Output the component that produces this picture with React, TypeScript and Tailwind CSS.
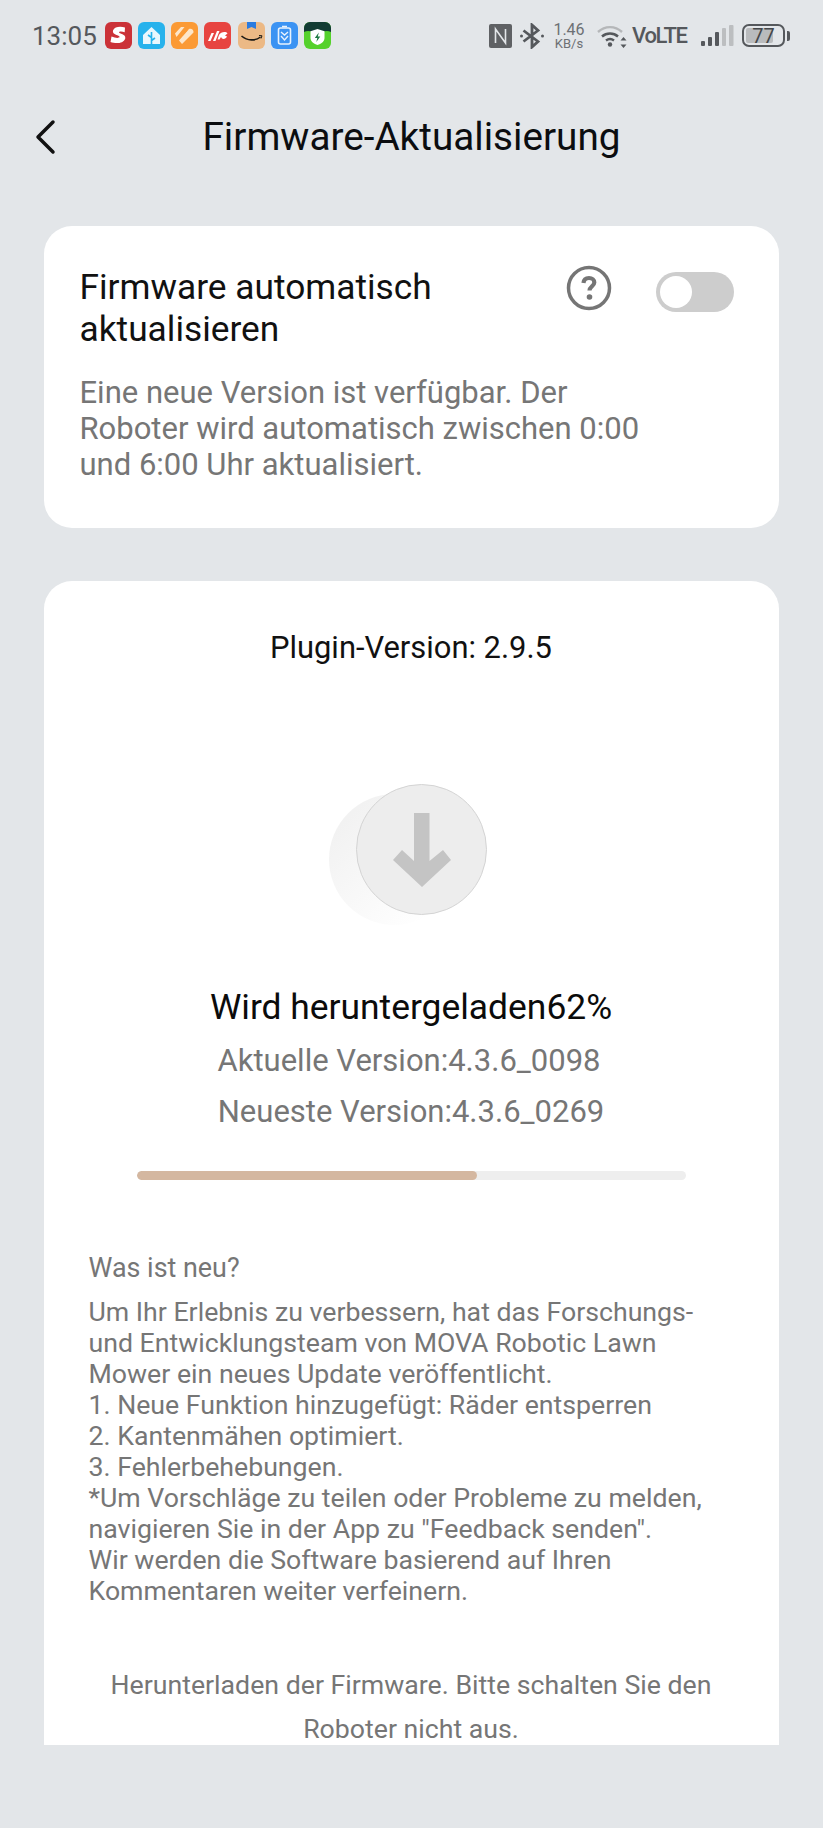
import React from "react";

const Font = "font-['Roboto',sans-serif]";

function AppIcons() {
  return (
    <div className="flex items-center gap-[6.2px]">
      <svg width="27" height="27" viewBox="0 0 27 27"><rect width="27" height="27" rx="6" fill="#cb3238"/><path d="M20 5.500c-4.500-1.200-10.500-1-12 3-1.300 4.500 7 4.500 6.500 6.500-.4 1.500-4.500 1-8-.5l-1 5.500c5 1.800 12.800 1.800 14.700-3.300 1.300-5-6.500-5-6.200-6.500.3-1 3.500-.8 5.700 0z" fill="#fff"/></svg>
      <svg width="27" height="27" viewBox="0 0 27 27"><rect width="27" height="27" rx="6" fill="#27b2ec"/><path d="M13.500 5 5 13v9h17v-9z" fill="#eaf7fd"/><path d="M13.500 10v12M13.500 15.500l-3.500-2.500M13.500 18.500l3.500-2.500" stroke="#27b2ec" strokeWidth="1.600" fill="none"/></svg>
      <svg width="27" height="27" viewBox="0 0 27 27"><rect width="27" height="27" rx="6" fill="#fb9a35"/><path d="M4 11.500 10 5h3.500L5.500 15zM8 18.500 18 7c2-1 5 .5 4.500 3.500L11 22z" fill="#fde6c9"/><path d="M11 13.500l5-5.500" stroke="#fb9a35" strokeWidth="1.500"/></svg>
      <svg width="27" height="27" viewBox="0 0 27 27"><rect width="27" height="27" rx="6" fill="#e74440"/><path d="M4 19l3.500-8H10l-3.500 8zM9 19l4-10h2.500l-4 10zM15 13c1.500-3 7-4 8.500-1.500l-2.500 2 2 1c-1 2-3 3-5 2l-1-1.500-1.500 2.500h-2z" fill="#fff"/></svg>
      <svg width="27" height="27" viewBox="0 0 27 27"><rect width="27" height="27" rx="6" fill="#ecb985"/><path d="M9 0h9v7l-4.500-2L9 7z" fill="#2a7be0"/><path d="M3.500 14c6 5 14 5 19 1" stroke="#1c1a16" strokeWidth="1.600" fill="none"/><path d="M21 13.500l3 .3-1 2.700" stroke="#1c1a16" strokeWidth="1" fill="none"/></svg>
      <svg width="27" height="27" viewBox="0 0 27 27"><rect width="27" height="27" rx="6" fill="#3b93f3"/><rect x="7.500" y="6" width="12" height="16" rx="2" fill="none" stroke="#e7f2fe" strokeWidth="1.600"/><path d="M11 4.500h5M10 10l3.500 3 3.500-3M10 14l3.500 4 3.500-4" stroke="#e7f2fe" strokeWidth="1.400" fill="none"/></svg>
      <svg width="27" height="27" viewBox="0 0 27 27"><defs><clipPath id="g"><rect width="27" height="27" rx="6"/></clipPath></defs><g clipPath="url(#g)"><rect width="27" height="27" fill="#55d12c"/><path d="M0 0h27v10c-4-2-8 0-13.500 0S4 8 0 10z" fill="#123b33"/><path d="M13.500 7l7 2.300v6.700c0 3.500-3.500 6-7 7-3.500-1-7-3.500-7-7V9.300z" fill="#fff"/><path d="M14.800 10.500l-4 5.500h2.500l-1 4 4-5.500h-2.500z" fill="#1e7a43"/></g></svg>
    </div>
  );
}

function StatusRight() {
  return (
    <div className="flex items-center text-[#55585c]">
      <svg width="23" height="24" viewBox="0 0 23 24"><rect width="23" height="24" rx="2" fill="#5f6164"/><path d="M6.500 19V5l10 14V5" stroke="#e3e6e9" strokeWidth="1.600" fill="none"/></svg>
      <svg width="24" height="26" viewBox="0 0 24 26" className="ml-[8px]"><path d="M3.500 7.500 18 18.500 12 24V2l6 5.500L3.500 18.500" stroke="#55585c" strokeWidth="2.800" fill="none"/><circle cx="1.500" cy="13" r="1.500" fill="#55585c"/><circle cx="22.500" cy="13" r="1.500" fill="#55585c"/></svg>
      <div className="ml-[9px] flex w-[32px] flex-col items-center text-[#6d7074]">
        <span className="text-[16px] leading-[15px]">1.46</span>
        <span className="text-[13px] leading-[13px]">KB/s</span>
      </div>
      <svg width="30" height="24" viewBox="0 0 30 24" className="ml-[12px]">
        <path d="M1 8c7-6.500 17-6.500 24 0" stroke="#b5b7b9" strokeWidth="2.400" fill="none"/>
        <path d="M5 12.500c4.500-4 11.500-4 16 0" stroke="#55585c" strokeWidth="2.400" fill="none"/>
        <path d="M9 16.500c2.500-2 5.500-2 8 0" stroke="#55585c" strokeWidth="2.400" fill="none"/>
        <circle cx="13" cy="20.500" r="2.200" fill="#55585c"/>
        <path d="M26.500 13l3 3.500h-6zM26.500 24l3-3.500h-6z" fill="#55585c"/>
      </svg>
      <span className="ml-[5px] w-[51px] text-[22px] font-medium leading-none tracking-[-1.300px] text-[#55585c]">VoLTE</span>
      <svg width="33" height="22" viewBox="0 0 33 22" className="ml-[18px]">
        <rect x="0" y="16" width="4" height="5" rx="1" fill="#55585c"/>
        <rect x="7" y="12" width="4" height="9" rx="1" fill="#55585c"/>
        <rect x="14" y="7" width="4" height="14" rx="1" fill="#55585c"/>
        <rect x="21" y="3" width="4" height="18" rx="1" fill="#bcbec0"/>
        <rect x="28" y="0" width="4.500" height="21" rx="1" fill="#bcbec0"/>
      </svg>
      <div className="relative ml-[8px] flex h-[23px] w-[43px] items-center justify-center rounded-[7px] border-[2px] border-[#55585c]">
        <div className="absolute bottom-[2px] left-[2px] top-[2px] w-[27px] rounded-[2px] bg-[#b9bbbd]" />
        <span className="relative text-[20px] leading-none text-[#44474a]">77</span>
      </div>
      <div className="ml-[2px] h-[10px] w-[3px] rounded-r-[2px] bg-[#55585c]" />
    </div>
  );
}

function DownloadArt() {
  return (
    <div className="relative h-[141px] w-[158px]">
      <div className="absolute bottom-0 left-0 size-[131px] rounded-full bg-gradient-to-br from-[#efefef] to-white to-[85%]" />
      <div className="absolute right-0 top-0 flex size-[131px] items-center justify-center rounded-full border-[1.5px] border-[#d4d4d4] bg-[#ededed]">
        <svg width="58" height="74" viewBox="0 0 58 74">
          <path d="M21 0h15.500v48L50 37l8 10-29 27L0 47l9-10 12 11z" fill="#c4c4c4" />
        </svg>
      </div>
    </div>
  );
}

export default function App() {
  return (
    <div className={`${Font} flex h-[1828px] w-[823px] flex-col items-center overflow-hidden bg-[#e3e6e9]`}>
      <div className="flex h-[70px] w-full shrink-0 items-center justify-between pl-[32px] pr-[33px] pt-[1px]">
        <div className="flex items-center gap-[8px]">
          <span className="text-[26px] leading-none text-[#55585c]">13:05</span>
          <AppIcons />
        </div>
        <StatusRight />
      </div>

      <div className="relative flex h-[156px] w-full shrink-0 items-start justify-center pt-[43px]">
        <svg width="22" height="36" viewBox="0 0 22 36" className="absolute left-[34px] top-[49px]">
          <path d="M19 3 4 18l15 15" stroke="#111" strokeWidth="3.500" strokeLinecap="round" strokeLinejoin="round" fill="none" />
        </svg>
        <h1 className="text-[38.700px] font-normal leading-[48px] text-[#0b0d10]">Firmware-Aktualisierung</h1>
      </div>

      <section className="ml-[-1px] h-[302px] w-[735px] shrink-0 rounded-[28px] bg-white pl-[36px] pt-[40px]">
        <div className="flex items-start">
          <p className="w-[450px] text-[35.300px] leading-[42px] text-[#111]">Firmware automatisch aktualisieren</p>
          <svg width="46" height="46" viewBox="0 0 46 46" className="ml-[36px] mt-[-1px]">
            <circle cx="23" cy="23" r="20.500" stroke="#757575" strokeWidth="3.500" fill="none" />
            <path d="M17.500 18c.3-3.500 2.500-5 5.500-5 3.200 0 5.300 1.800 5.300 4.500 0 3.500-4.800 4-4.800 8" stroke="#757575" strokeWidth="4.200" fill="none" />
            <circle cx="23.500" cy="32" r="2.800" fill="#757575" />
          </svg>
          <div className="ml-[44px] mt-[6px] flex h-[40px] w-[78px] items-center rounded-full bg-[#cdcdcd] pl-[4px]">
            <div className="size-[32px] rounded-full bg-white" />
          </div>
        </div>
        <p className="mt-[25px] w-[570px] text-[31px] leading-[36px] text-[#767676]">
          Eine neue Version ist verfügbar. Der Roboter wird automatisch zwischen 0:00 und 6:00 Uhr aktualisiert.
        </p>
      </section>

      <section className="ml-[-1px] mt-[53px] flex h-[1164px] w-[735px] shrink-0 flex-col items-center overflow-hidden rounded-t-[28px] bg-white">
        <p className="mt-[50px] text-[30.900px] leading-[34px] text-[#111]">Plugin-Version: 2.9.5</p>
        <div className="ml-[-6px] mt-[119px]"><DownloadArt /></div>
        <p className="mt-[60px] text-[35.400px] leading-[44px] text-[#0b0b0b]">Wird heruntergeladen62%</p>
        <p className="ml-[-4px] mt-[10px] text-[31px] leading-[44px] text-[#767676]">Aktuelle Version:4.3.6_0098</p>
        <p className="mt-[7px] text-[31px] leading-[44px] text-[#767676]">Neueste Version:4.3.6_0269</p>
        <div className="mt-[37px] h-[9px] w-[549px] shrink-0 overflow-hidden rounded-full bg-[#eeeeee]">
          <div className="h-full w-[62%] rounded-full bg-[#d4b7a0]" />
        </div>
        <div className="mt-[73px] w-full pl-[45px] pr-[30px] text-[#767676]">
          <p className="text-[26.900px] leading-[30px]">Was ist neu?</p>
          <p className="mt-[14px] text-[26.700px] leading-[31px]">
            Um Ihr Erlebnis zu verbessern, hat das Forschungs-<br />
            und Entwicklungsteam von MOVA Robotic Lawn<br />
            Mower ein neues Update veröffentlicht.<br />
            1. Neue Funktion hinzugefügt: Räder entsperren<br />
            2. Kantenmähen optimiert.<br />
            3. Fehlerbehebungen.<br />
            *Um Vorschläge zu teilen oder Probleme zu melden,<br />
            navigieren Sie in der App zu "Feedback senden".<br />
            Wir werden die Software basierend auf Ihren<br />
            Kommentaren weiter verfeinern.
          </p>
        </div>
        <p className="mt-[56px] w-[640px] text-center text-[26.700px] leading-[44px] text-[#767676]">
          Herunterladen der Firmware. Bitte schalten Sie den Roboter nicht aus.
        </p>
      </section>
    </div>
  );
}
